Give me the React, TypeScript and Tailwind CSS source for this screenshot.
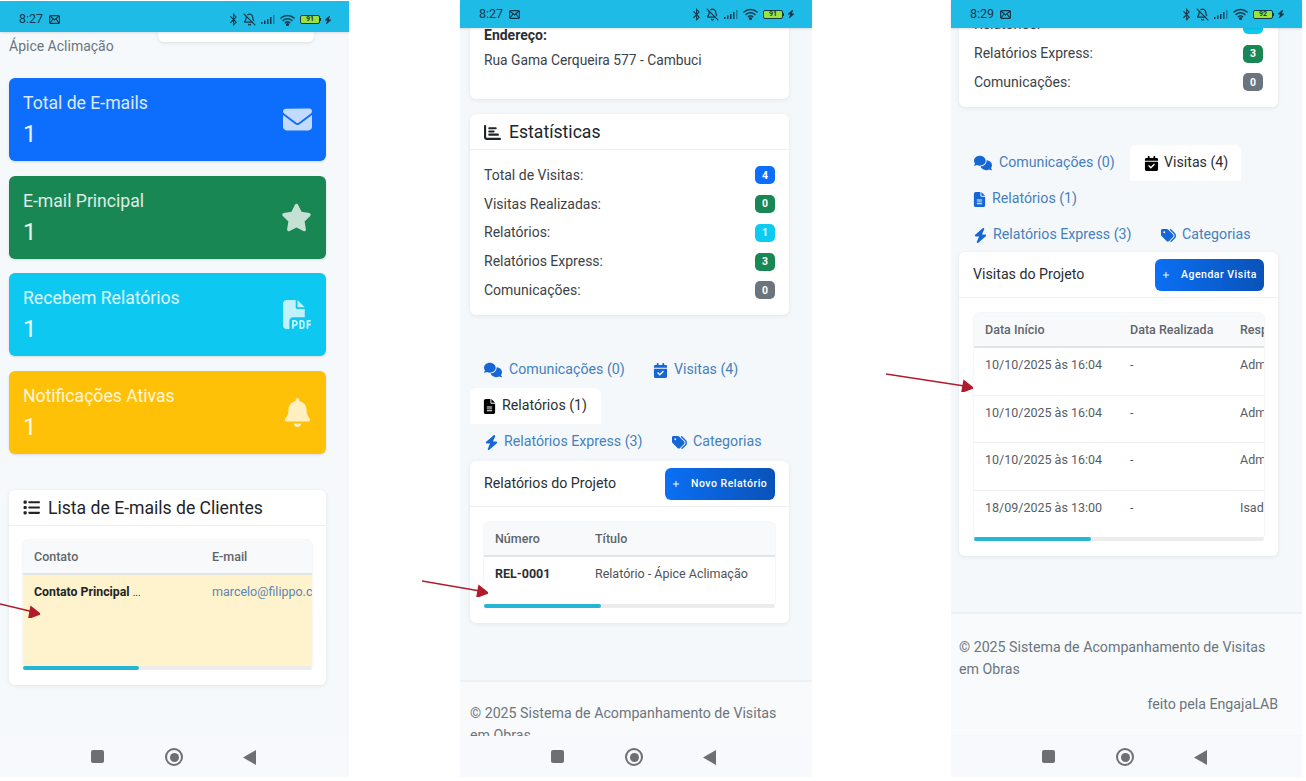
import type { ReactNode } from "react";
import {
  FaBell,
  FaBolt,
  FaBluetoothB,
  FaCalendarCheck,
  FaChartBar,
  FaComments,
  FaEnvelope,
  FaFileLines,
  FaFilePdf,
  FaList,
  FaPlus,
  FaStar,
  FaTags,
} from "react-icons/fa6";
import { BellOff } from "lucide-react";

function StatusBar({ time, level, className }: { time: string; level: string; className: string }) {
  return (
    <div className={`relative z-10 flex shrink-0 items-center justify-between bg-[#1dbbe6] pl-[19px] pr-[17px] text-[#17374a] shadow-[0_1px_2px_rgba(0,0,0,0.12)] ${className}`}>
      <div className="flex items-center gap-[6px]">
        <span className="text-[12.5px] leading-none">{time}</span>
        <svg width="11" height="9" viewBox="0 0 11 9" fill="none" stroke="currentColor" strokeWidth="1.2">
          <rect x="0.6" y="0.6" width="9.8" height="7.8" rx="1" />
          <path d="M1 1l4.5 4L10 1M1 8l3-4M10 8L7 4" />
        </svg>
      </div>
      <div className="flex items-center">
        <FaBluetoothB className="size-[13px]" />
        <BellOff className="ml-[3px] size-[13px]" strokeWidth={2.2} />
        <svg className="ml-[5px]" width="14" height="9" viewBox="0 0 14 9" fill="currentColor">
          <rect x="0" y="7" width="1.5" height="2" />
          <rect x="3" y="5.5" width="1.5" height="3.5" />
          <rect x="6" y="4" width="1.5" height="5" />
          <rect x="9" y="2" width="1.5" height="7" />
          <rect x="12" y="0" width="1.5" height="9" opacity="0.45" />
        </svg>
        <svg className="ml-[5px]" width="15" height="12" viewBox="0 0 15 12" fill="none" stroke="currentColor" strokeWidth="1.5" strokeLinecap="round">
          <path d="M1 4c3.6-3.2 9.4-3.2 13 0M3.2 6.4c2.4-2.1 6.2-2.1 8.6 0M5.4 8.7c1.2-1 3-1 4.2 0" />
          <circle cx="7.5" cy="10.6" r="0.8" fill="currentColor" />
        </svg>
        <div className="ml-[5px] flex h-[9px] w-[20px] items-center justify-center rounded-[2px] border border-[#17374a] bg-[#9be23a] text-[7px] font-bold leading-none">
          {level}
        </div>
        <div className="h-[3px] w-px bg-[#17374a]" />
        <FaBolt className="ml-[3px] size-[8px]" />
      </div>
    </div>
  );
}

function NavBar() {
  return (
    <div className="relative z-10 flex h-[41px] shrink-0 items-start bg-[#f8f9fd] pl-[91px] pt-[14px]">
      <div className="size-[13px] rounded-[2px] bg-[#6e6e73]" />
      <div className="ml-[61px] flex size-[18px] -translate-y-[2px] items-center justify-center rounded-full border-2 border-[#6e6e73]">
        <div className="size-[9px] rounded-full bg-[#6e6e73]" />
      </div>
      <svg className="ml-[60px]" width="13" height="15" viewBox="0 0 13 15" fill="#6e6e73">
        <path d="M13 0v15L0 7.5z" />
      </svg>
    </div>
  );
}

function StatCard({ title, icon, color }: { title: string; icon: ReactNode; color: string }) {
  return (
    <div className={`flex h-[83px] items-center justify-between rounded-[6px] px-[14px] text-white shadow-sm ${color}`}>
      <div className="pt-[2px]">
        <div className="text-[17.6px] leading-[24px] text-white/85">{title}</div>
        <div className="mt-[3px] text-[24px] leading-[32px] text-white/90">1</div>
      </div>
      <div className="opacity-75">{icon}</div>
    </div>
  );
}

function Card({ className, children }: { className?: string; children: ReactNode }) {
  return <div className={`rounded-[6px] bg-white shadow-[0_1px_4px_rgba(0,0,0,0.08)] ${className ?? ""}`}>{children}</div>;
}

function StatRow({ label, value, color }: { label: string; value: number; color: string }) {
  return (
    <div className="flex h-[28.75px] items-center justify-between text-[14px] text-[#3c4248]">
      <span>{label}</span>
      <span className={`flex h-[18px] w-[20px] items-center justify-center rounded-[5px] text-[10.5px] font-bold text-white ${color}`}>
        {value}
      </span>
    </div>
  );
}

function Tab({ icon, label, active, className }: { icon: ReactNode; label: string; active?: boolean; className: string }) {
  return (
    <div
      className={`flex h-[36px] items-center rounded-t-[6px] text-[14.2px] ${
        active ? "bg-white text-[#2b2f33]" : "text-[#4580bd]"
      } ${className}`}
    >
      {icon}
      <span>{label}</span>
    </div>
  );
}

function Tabs({ active }: { active: "relatorios" | "visitas" }) {
  const blue = "text-[#1667d6]";
  const isVisitas = active === "visitas";
  const isRel = active === "relatorios";
  return (
    <div>
      <div className="flex">
        <Tab
          className={isVisitas ? "w-[171px] pl-[15px]" : "w-[170px] pl-[14px]"}
          label="Comunicações (0)"
          icon={<FaComments className={`mr-[7px] size-[18px] ${blue}`} />}
        />
        <Tab
          active={isVisitas}
          className={isVisitas ? "w-[111px] pl-[14px]" : "w-[100px] pl-[13px]"}
          label="Visitas (4)"
          icon={<FaCalendarCheck className={`size-[15px] ${isVisitas ? "mr-[5px] text-black" : `mr-[6px] ${blue}`}`} />}
        />
      </div>
      <div className="flex">
        <Tab
          active={isRel}
          className={isRel ? "w-[131px] pl-[12px]" : "w-[120px] pl-[13px]"}
          label="Relatórios (1)"
          icon={<FaFileLines className={`mr-[5px] size-[15px] ${isRel ? "text-black" : blue}`} />}
        />
      </div>
      <div className="flex">
        <Tab
          className="w-[187px] pl-[14px]"
          label="Relatórios Express (3)"
          icon={<FaBolt className={`mr-[5px] size-[15px] ${blue}`} />}
        />
        <Tab
          className="w-[120px] pl-[15px]"
          label="Categorias"
          icon={<FaTags className={`mr-[6px] size-[15px] ${blue}`} />}
        />
      </div>
    </div>
  );
}

function PanelHeader({ title, action, width }: { title: string; action: string; width: string }) {
  return (
    <div className="flex h-[46px] items-center justify-between border-b border-[#eef0f2] px-[14px] text-[14.2px] text-[#2b2f33]">
      <span className="pt-px">{title}</span>
      <div className={`flex h-[32px] items-center rounded-[6px] bg-gradient-to-r from-[#0a70f5] to-[#0a52b8] pl-[7px] text-[10.5px] font-medium tracking-[0.5px] text-white ${width}`}>
        <FaPlus className="mr-[11px] size-[8px]" />
        {action}
      </div>
    </div>
  );
}

function ScrollBar({ width }: { width: string }) {
  return (
    <div className="h-[4px] rounded-full bg-[#ececec]">
      <div className={`h-full rounded-full bg-[#25b6d6] ${width}`} />
    </div>
  );
}

function Th({ children }: { children: ReactNode }) {
  return <th className="h-[34px] border-b-2 border-[#e2e4e6] bg-[#f7f9fb] pl-[11px] pt-[2px] text-left text-[12.5px] font-medium text-[#5f656b]">{children}</th>;
}

function Arrow({ className, w, h }: { className: string; w: number; h: number }) {
  return (
    <svg className={`absolute ${className}`} width={w} height={h} viewBox={`0 0 ${w} ${h}`} fill="none" stroke="#b01c2b" strokeWidth="1.6">
      <path d={`M0 1L${w - 2} ${h - 5}`} />
      <path d={`M${w - 9} ${h - 11}L${w} ${h - 4}L${w - 11} ${h}z`} fill="#b01c2b" />
    </svg>
  );
}

function FirstPhone() {
  return (
    <div className="mt-px flex h-[776px] w-[349px] shrink-0 flex-col bg-[#f6f9fc]">
      <StatusBar time="8:27" level="91" className="h-[31px] pt-[6px]" />
      <div className="min-h-0 flex-1 overflow-hidden px-[9px]">
        <div className="flex items-start justify-between pr-[26px]">
          <span className="pt-[4px] text-[14px] leading-[20px] text-[#6c757d]">Ápice Aclimação</span>
          <div className="h-[10px] w-[156px] rounded-b-[6px] bg-white shadow-[0_1px_4px_rgba(0,0,0,0.1)]" />
        </div>
        <div className="mt-[22px] flex w-[317px] flex-col gap-[14.67px]">
          <StatCard title="Total de E-mails" color="bg-[#0d6efd]" icon={<FaEnvelope className="size-[29px]" />} />
          <StatCard title="E-mail Principal" color="bg-[#198754]" icon={<FaStar className="size-[31px]" />} />
          <StatCard title="Recebem Relatórios" color="bg-[#0dc8f0]" icon={<FaFilePdf className="size-[29px]" />} />
          <StatCard title="Notificações Ativas" color="bg-[#ffc107]" icon={<FaBell className="size-[29px]" />} />
        </div>
        <Card className="mt-[36px] h-[195px] w-[317px]">
          <div className="flex h-[36px] items-center border-b border-[#eef0f2] pl-[14px] pt-px text-[17.6px] text-[#212529]">
            <FaList className="mr-[8px] size-[17px]" />
            Lista de E-mails de Clientes
          </div>
          <div className="mx-[14px] mt-[14px]">
            <div className="overflow-hidden rounded-t-[6px] shadow-[0_0_2px_rgba(0,0,0,0.14)]">
              <table className="w-[500px] table-fixed border-collapse">
                <colgroup>
                  <col className="w-[178px]" />
                  <col />
                </colgroup>
                <thead>
                  <tr>
                    <Th>Contato</Th>
                    <Th>E-mail</Th>
                  </tr>
                </thead>
                <tbody>
                  <tr className="h-[92px] bg-[#fff3cd] align-top">
                    <td className="pl-[11px] pt-[8px] text-[12.3px] font-bold text-[#212529]">
                      Contato Principal <span className="text-[10px] font-normal">...</span>
                    </td>
                    <td className="pl-[11px] pt-[8px] text-[12.5px] text-[#5a86b8]">marcelo@filippo.com.br</td>
                  </tr>
                </tbody>
              </table>
            </div>
            <ScrollBar width="w-[116px]" />
          </div>
        </Card>
      </div>
      <NavBar />
    </div>
  );
}

function SecondPhone() {
  return (
    <div className="flex h-[777px] w-[352px] shrink-0 flex-col bg-[#f5f8fb]">
      <StatusBar time="8:27" level="91" className="h-[28px]" />
      <div className="min-h-0 flex-1 overflow-hidden">
        <div className="ml-[10px] w-[319px]">
          <Card className="h-[71px] rounded-t-none px-[14px]">
            <div className="text-[14px] font-bold leading-[14px] text-[#2b2f33]">Endereço:</div>
            <div className="mt-[8px] text-[13.8px] leading-[21px] text-[#3c4248]">Rua Gama Cerqueira 577 - Cambuci</div>
          </Card>
          <Card className="mt-[15px] h-[201px]">
            <div className="flex h-[36px] items-center border-b border-[#eef0f2] pl-[14px] pt-px text-[17.6px] text-[#212529]">
              <FaChartBar className="mr-[8px] size-[17px]" />
              Estatísticas
            </div>
            <div className="px-[14px] pt-[11px]">
              <StatRow label="Total de Visitas:" value={4} color="bg-[#0d6efd]" />
              <StatRow label="Visitas Realizadas:" value={0} color="bg-[#198754]" />
              <StatRow label="Relatórios:" value={1} color="bg-[#0dcaf0]" />
              <StatRow label="Relatórios Express:" value={3} color="bg-[#198754]" />
              <StatRow label="Comunicações:" value={0} color="bg-[#6c757d]" />
            </div>
          </Card>
          <div className="mt-[37px]">
            <Tabs active="relatorios" />
          </div>
          <Card className="mt-px h-[162px]">
            <PanelHeader title="Relatórios do Projeto" action="Novo Relatório" width="w-[110px]" />
            <div className="mx-[14px] mt-[15px]">
              <div className="overflow-hidden rounded-t-[6px] shadow-[0_0_2px_rgba(0,0,0,0.14)]">
                <table className="w-full table-fixed border-collapse">
                  <colgroup>
                    <col className="w-[100px]" />
                    <col />
                  </colgroup>
                  <thead>
                    <tr>
                      <Th>Número</Th>
                      <Th>Título</Th>
                    </tr>
                  </thead>
                  <tbody>
                    <tr className="h-[48px] align-top text-[12.5px]">
                      <td className="pl-[11px] pt-[8px] font-bold text-[#2b2f33]">REL-0001</td>
                      <td className="pl-[11px] pt-[8px] text-[#4d5359]">Relatório - Ápice Aclimação</td>
                    </tr>
                  </tbody>
                </table>
              </div>
              <ScrollBar width="w-[117px]" />
            </div>
          </Card>
        </div>
        <div className="mt-[57px] border-t-2 border-[#eef1f4] bg-[#f8fafc] pl-[10px] pr-[24px] pt-[20px] text-[14.2px] leading-[22px] text-[#6c757d]">
          © 2025 Sistema de Acompanhamento de Visitas em Obras
        </div>
      </div>
      <NavBar />
    </div>
  );
}

const visits = [
  { date: "10/10/2025 às 16:04", who: "Administrador", height: "h-[48px]" },
  { date: "10/10/2025 às 16:04", who: "Administrador", height: "h-[47px]" },
  { date: "10/10/2025 às 16:04", who: "Administrador", height: "h-[48px]" },
  { date: "18/09/2025 às 13:00", who: "Isadora", height: "h-[47px]" },
];

function ThirdPhone() {
  return (
    <div className="flex h-[777px] w-[351px] shrink-0 flex-col bg-[#f5f8fb]">
      <StatusBar time="8:29" level="92" className="h-[28px]" />
      <div className="min-h-0 flex-1 overflow-hidden">
        <div className="ml-[8px] w-[319px]">
          <Card className="h-[79px] overflow-hidden rounded-t-none px-[15px]">
            <div className="-mt-[17.5px]">
              <StatRow label="Relatórios:" value={1} color="bg-[#0dcaf0]" />
              <StatRow label="Relatórios Express:" value={3} color="bg-[#198754]" />
              <StatRow label="Comunicações:" value={0} color="bg-[#6c757d]" />
            </div>
          </Card>
          <div className="mt-[38px]">
            <Tabs active="visitas" />
          </div>
          <Card className="-mt-px h-[304px]">
            <PanelHeader title="Visitas do Projeto" action="Agendar Visita" width="w-[109px]" />
            <div className="ml-[15px] mt-[15px] w-[290px]">
              <div className="overflow-hidden rounded-t-[6px] shadow-[0_0_2px_rgba(0,0,0,0.14)]">
                <table className="w-[500px] table-fixed border-collapse">
                  <colgroup>
                    <col className="w-[145px]" />
                    <col className="w-[110px]" />
                    <col />
                  </colgroup>
                  <thead>
                    <tr>
                      <Th>Data Início</Th>
                      <Th>Data Realizada</Th>
                      <Th>Responsável</Th>
                    </tr>
                  </thead>
                  <tbody>
                    {visits.map((v, i) => (
                      <tr key={i} className={`${v.height} border-b border-[#eef0f2] align-top text-[12.5px] text-[#575d63] last:border-b-0`}>
                        <td className="pl-[11px] pt-[8px]">{v.date}</td>
                        <td className="pl-[11px] pt-[8px]">-</td>
                        <td className="pl-[11px] pt-[8px]">{v.who}</td>
                      </tr>
                    ))}
                  </tbody>
                </table>
              </div>
              <ScrollBar width="w-[117px]" />
            </div>
          </Card>
        </div>
        <div className="mt-[56px] border-t-2 border-[#eef1f4] bg-[#f8fafc] pb-[20px] pl-[8px] pr-[24px] pt-[22px] text-[14.2px] leading-[22px] text-[#6c757d]">
          <div>© 2025 Sistema de Acompanhamento de Visitas em Obras</div>
          <div className="mt-[13px] text-right">feito pela EngajaLAB</div>
        </div>
      </div>
      <NavBar />
    </div>
  );
}

export default function App() {
  return (
    <div className="relative flex h-[781px] w-[1306px] items-start overflow-hidden bg-white font-['Roboto',sans-serif]">
      <FirstPhone />
      <div className="ml-[111px]">
        <SecondPhone />
      </div>
      <div className="ml-[139px]">
        <ThirdPhone />
      </div>
      <Arrow className="left-0 top-[603px]" w={40} h={15} />
      <Arrow className="left-[422px] top-[580px]" w={66} h={17} />
      <Arrow className="left-[886px] top-[373px]" w={87} h={19} />
    </div>
  );
}
